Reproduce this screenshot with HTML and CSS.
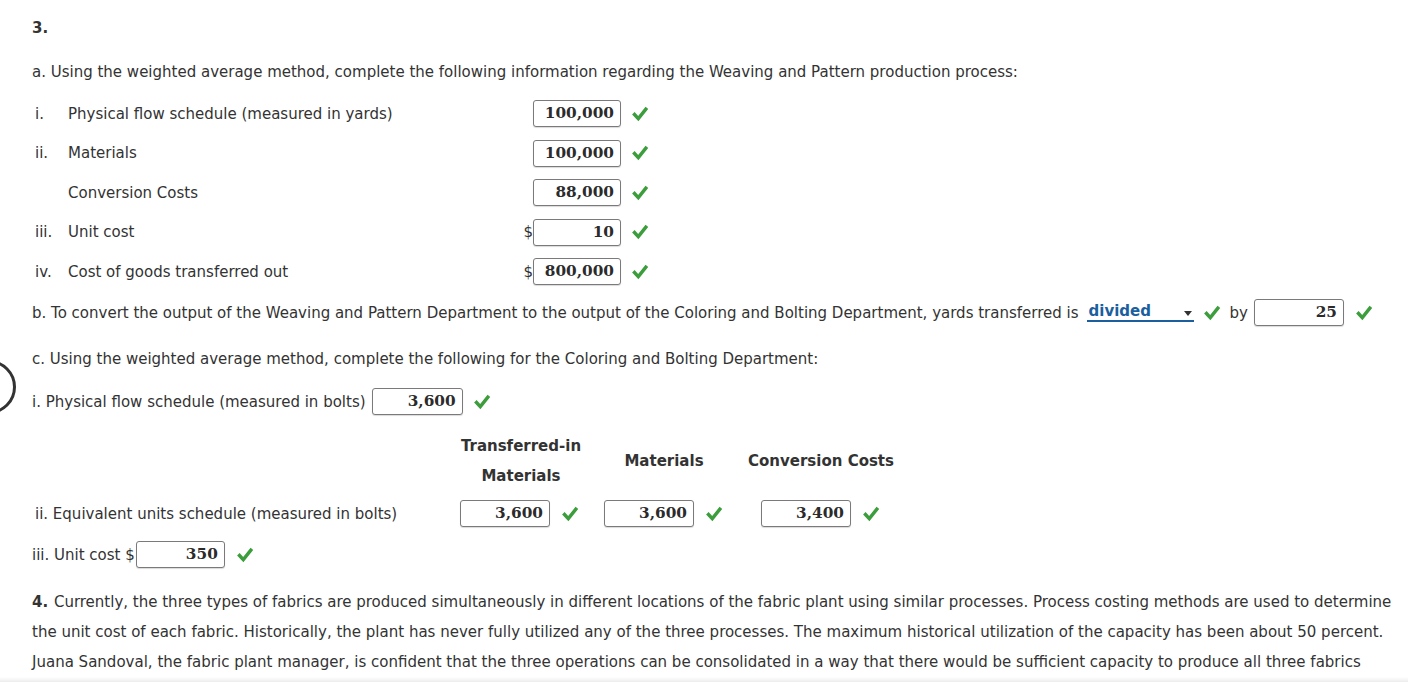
FILE: index.html
```html
<!DOCTYPE html>
<html>
<head>
<meta charset="utf-8">
<link rel="stylesheet" href="styles.css">
</head>
<body>
<div class="ring"></div>
<main class="page">
  <div class="qnum">3.</div>
  <p class="lead">a. Using the weighted average method, complete the following information regarding the Weaving and Pattern production process:</p>

  <div class="rows">
    <div class="row"><span class="roman">i.</span><span class="label">Physical flow schedule (measured in yards)</span><span class="cur"></span><span class="box w88">100,000</span><svg class="chk" viewBox="0 0 16 16"><path d="M2.5 8.5 L6.3 12.6 L13.8 3.2"/></svg></div>
    <div class="row"><span class="roman">ii.</span><span class="label">Materials</span><span class="cur"></span><span class="box w88">100,000</span><svg class="chk" viewBox="0 0 16 16"><path d="M2.5 8.5 L6.3 12.6 L13.8 3.2"/></svg></div>
    <div class="row"><span class="roman"></span><span class="label">Conversion Costs</span><span class="cur"></span><span class="box w88">88,000</span><svg class="chk" viewBox="0 0 16 16"><path d="M2.5 8.5 L6.3 12.6 L13.8 3.2"/></svg></div>
    <div class="row"><span class="roman">iii.</span><span class="label">Unit cost</span><span class="cur">$</span><span class="box w88">10</span><svg class="chk" viewBox="0 0 16 16"><path d="M2.5 8.5 L6.3 12.6 L13.8 3.2"/></svg></div>
    <div class="row"><span class="roman">iv.</span><span class="label">Cost of goods transferred out</span><span class="cur">$</span><span class="box w88">800,000</span><svg class="chk" viewBox="0 0 16 16"><path d="M2.5 8.5 L6.3 12.6 L13.8 3.2"/></svg></div>
  </div>

  <div class="line-b"><span class="btext">b. To convert the output of the Weaving and Pattern Department to the output of the Coloring and Bolting Department, yards transferred is</span><span class="select">divided<span class="caret"></span></span><svg class="chk" viewBox="0 0 16 16"><path d="M2.5 8.5 L6.3 12.6 L13.8 3.2"/></svg><span class="by">by</span><span class="box w90">25</span><svg class="chk" viewBox="0 0 16 16"><path d="M2.5 8.5 L6.3 12.6 L13.8 3.2"/></svg></div>

  <p class="lead c">c. Using the weighted average method, complete the following for the Coloring and Bolting Department:</p>

  <div class="line-bolts"><span class="btext">i. Physical flow schedule (measured in bolts)</span><span class="box w91">3,600</span><svg class="chk" viewBox="0 0 16 16"><path d="M2.5 8.5 L6.3 12.6 L13.8 3.2"/></svg></div>

  <div class="eq">
    <div class="eq-label">ii. Equivalent units schedule (measured in bolts)</div>
    <div class="eq-col col1">
      <div class="head two"><span>Transferred-in<br>Materials</span></div>
      <div class="cell"><span class="box w90">3,600</span><svg class="chk" viewBox="0 0 16 16"><path d="M2.5 8.5 L6.3 12.6 L13.8 3.2"/></svg></div>
    </div>
    <div class="eq-col col2">
      <div class="head"><span>Materials</span></div>
      <div class="cell"><span class="box w90">3,600</span><svg class="chk" viewBox="0 0 16 16"><path d="M2.5 8.5 L6.3 12.6 L13.8 3.2"/></svg></div>
    </div>
    <div class="eq-col col3">
      <div class="head"><span>Conversion Costs</span></div>
      <div class="cell"><span class="box w90">3,400</span><svg class="chk" viewBox="0 0 16 16"><path d="M2.5 8.5 L6.3 12.6 L13.8 3.2"/></svg></div>
    </div>
  </div>

  <div class="line-unit"><span class="btext">iii. Unit cost $</span><span class="box w89">350</span><svg class="chk" viewBox="0 0 16 16"><path d="M2.5 8.5 L6.3 12.6 L13.8 3.2"/></svg></div>

  <p class="para"><b class="pnum">4.</b> Currently, the three types of fabrics are produced simultaneously in different locations of the fabric plant using similar processes. Process costing methods are used to determine the unit cost of each fabric. Historically, the plant has never fully utilized any of the three processes. The maximum historical utilization of the capacity has been about 50 percent. Juana Sandoval, the fabric plant manager, is confident that the three operations can be consolidated in a way that there would be sufficient capacity to produce all three fabrics</p>
</main>
<div class="footer-shadow"></div>
</body>
</html>
```

FILE: styles.css
```css
html, body {
  margin: 0;
  padding: 0;
  background: #fff;
  overflow: hidden;
}
body {
  width: 1408px;
  height: 682px;
  position: relative;
  font-family: "DejaVu Sans", Verdana, sans-serif;
  font-size: 15px;
  color: #333;
}
.ring {
  position: absolute;
  left: -38px;
  top: 360px;
  width: 48px;
  height: 48px;
  border: 3px solid #333;
  border-radius: 50%;
}
.footer-shadow {
  position: absolute;
  left: 0;
  right: 0;
  bottom: 0;
  height: 5px;
  background: linear-gradient(#fff, #ececec);
}
.page {
  padding: 18px 0 0 32px;
}
.qnum {
  font-weight: bold;
  line-height: 20px;
  height: 20px;
}
.lead {
  margin: 24px 0 0 0;
  line-height: 20px;
  height: 20px;
  white-space: nowrap;
}
.rows {
  margin-top: 12px;
}
.row {
  display: flex;
  align-items: center;
  height: 39.5px;
}
.roman {
  width: 36px;
  padding-left: 3px;
  box-sizing: border-box;
}
.label {
  width: 452px;
}
.cur {
  width: 13px;
  text-align: right;
}
.box {
  display: inline-block;
  flex: none;
  box-sizing: border-box;
  height: 27px;
  line-height: 25px;
  border: 1px solid #7a7a7a;
  border-radius: 3px;
  box-shadow: 0 1px 1px rgba(0,0,0,0.15);
  text-align: right;
  padding-right: 6px;
  font-family: "DejaVu Serif", Georgia, serif;
  font-weight: bold;
  font-size: 15.3px;
  color: #2b2b2b;
  background: #fff;
}
.w88 { width: 88px; }
.w89 { width: 89px; }
.w90 { width: 90px; }
.w91 { width: 91px; }
.chk {
  flex: none;
  width: 16px;
  height: 16px;
  margin-left: 11px;
}
.chk path {
  fill: none;
  stroke: #3c9d3c;
  stroke-width: 3.4;
  stroke-linecap: square;
  stroke-linejoin: miter;
}
.btext {
  white-space: nowrap;
}
.line-b {
  margin-top: 6px;
  display: flex;
  align-items: center;
  height: 30px;
}
.select {
  position: relative;
  display: inline-block;
  flex: none;
  box-sizing: border-box;
  width: 107px;
  margin-left: 8px;
  padding-left: 2px;
  color: #1b5f9e;
  font-weight: bold;
  border-bottom: 2px solid #1b5f9e;
  line-height: 17px;
  height: 19px;
}
.caret {
  position: absolute;
  right: 2px;
  top: 8px;
  width: 0;
  height: 0;
  border-left: 4px solid transparent;
  border-right: 4px solid transparent;
  border-top: 5px solid #333;
}
.line-b .chk { margin-left: 10px; }
.by {
  margin: 0 6px 0 10px;
}
.line-b .box + .chk { margin-left: 12px; }
.c {
  margin-top: 21px;
}
.line-bolts {
  margin-top: 18px;
  display: flex;
  align-items: center;
  height: 30px;
}
.line-bolts .box { margin-left: 6px; }
.eq {
  display: flex;
  align-items: flex-end;
  margin-top: 14px;
}
.eq-label {
  width: 425px;
  height: 46px;
  line-height: 46px;
  margin-left: 3px;
  white-space: nowrap;
}
.eq-col {
  display: flex;
  flex-direction: column;
  width: 120px;
}
.col1 { width: 122px; }
.head {
  display: flex;
  justify-content: center;
  align-items: center;
  font-weight: bold;
  text-align: center;
  height: 60px;
  line-height: 30px;
  white-space: nowrap;
}
.col2 { margin-left: 22px; }
.col3 { margin-left: 37px; }
.cell {
  display: flex;
  align-items: center;
  height: 46px;
}
.cell .chk { margin-left: 12px; }
.line-unit {
  display: flex;
  align-items: center;
  height: 30px;
  margin-top: 3px;
}
.line-unit .box { margin-left: 1px; }
.line-unit .chk { margin-left: 12px; }
.para {
  margin: 16px 0 0 0;
  width: 1368px;
  font-family: "DejaVu Sans Condensed", "DejaVu Sans", sans-serif;
  font-size: 16.7px;
  line-height: 30px;
}
.pnum {
  margin-right: 1px;
}
```
